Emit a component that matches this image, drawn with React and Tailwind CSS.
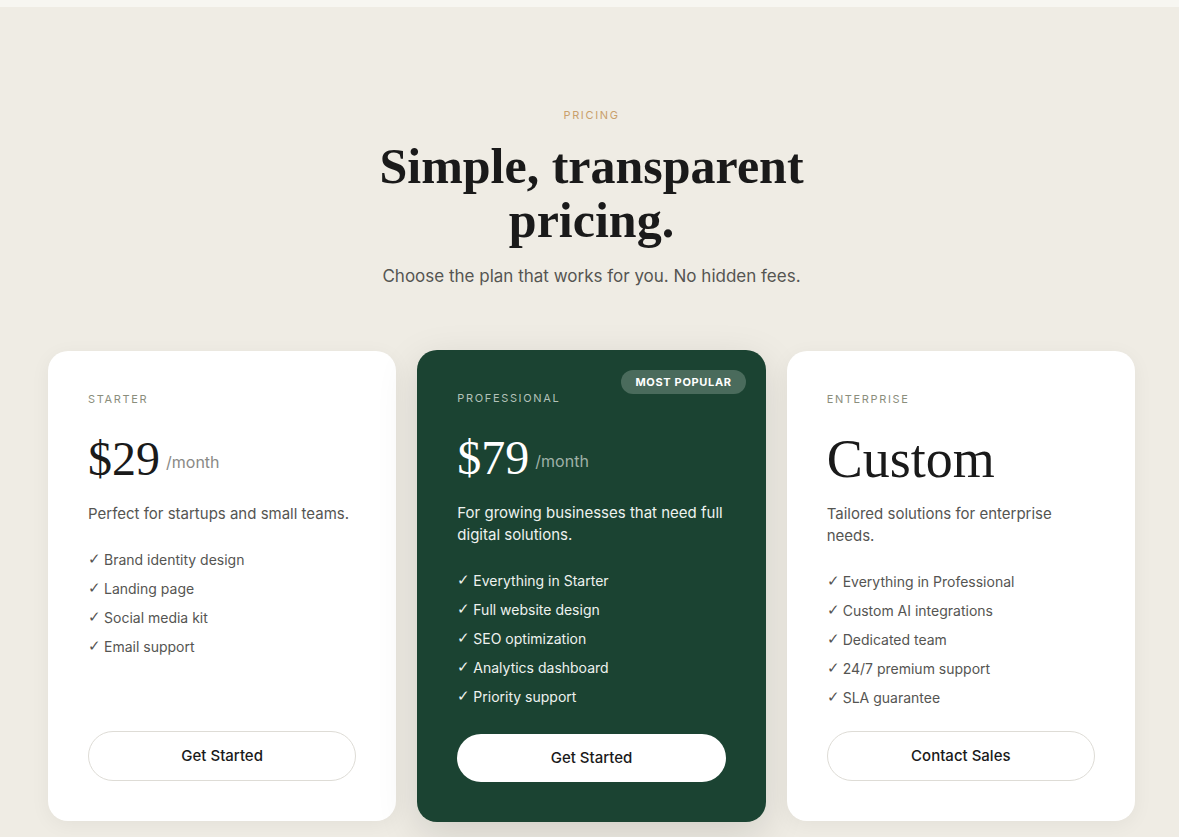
import React from "react";

const serif = { fontFamily: '"Liberation Serif", "DejaVu Serif", serif' };

const plans = [
  {
    name: "STARTER",
    price: "$29",
    per: "/month",
    desc: "Perfect for startups and small teams.",
    features: ["Brand identity design", "Landing page", "Social media kit", "Email support"],
    cta: "Get Started",
  },
  {
    name: "PROFESSIONAL",
    price: "$79",
    per: "/month",
    desc: "For growing businesses that need full digital solutions.",
    features: [
      "Everything in Starter",
      "Full website design",
      "SEO optimization",
      "Analytics dashboard",
      "Priority support",
    ],
    cta: "Get Started",
    featured: true,
  },
  {
    name: "ENTERPRISE",
    price: "Custom",
    desc: "Tailored solutions for enterprise needs.",
    features: [
      "Everything in Professional",
      "Custom AI integrations",
      "Dedicated team",
      "24/7 premium support",
      "SLA guarantee",
    ],
    cta: "Contact Sales",
  },
];

function Card({ p }) {
  const f = p.featured;
  return (
    <div
      className={
        f
          ? "relative -my-px flex flex-col rounded-[20px] bg-[#1b4332] px-10 pt-10 pb-10 shadow-[0_12px_40px_rgba(0,0,0,0.13)]"
          : "relative flex flex-col rounded-[20px] bg-white px-10 pt-10 pb-10 shadow-[0_4px_20px_rgba(0,0,0,0.05)]"
      }
    >
      {f && (
        <div className="absolute right-5 top-5 flex h-6 items-center rounded-full bg-[#4a6b5c] px-[14px] text-[11px] font-bold tracking-[0.06em] text-white">
          MOST POPULAR
        </div>
      )}
      <div
        className={
          "h-4 text-[11px] leading-4 tracking-[0.15em] " +
          (f ? "text-[#b3c2b9]" : "text-[#8b8e7c]")
        }
      >
        {p.name}
      </div>
      <div className="mt-6 flex h-14 items-end leading-[56px]">
        <span
          style={serif}
          className={
            (p.per ? "text-[48px] " : "text-[54px] ") +
            (f ? "text-white" : "text-[#1a1a1a]")
          }
        >
          {p.price}
        </span>
        {p.per && (
          <span
            className={
              "mb-[15px] ml-1.5 text-[16px] leading-5 " +
              (f ? "text-[#9fb1a7]" : "text-[#8a8a86]")
            }
          >
            {p.per}
          </span>
        )}
      </div>
      <p
        className={
          "mt-4 text-[15px] leading-[22px] " + (f ? "text-[#eef2ef]" : "text-[#555552]")
        }
      >
        {p.desc}
      </p>
      <ul className="mt-6 mb-[23px] flex flex-col gap-2">
        {p.features.map((x) => (
          <li
            key={x}
            className={
              "flex h-[21px] items-center gap-[3px] text-[14px] leading-[21px] " +
              (f ? "text-[#eef2ef]" : "text-[#555552]")
            }
          >
            <span
              style={{ fontFamily: '"DejaVu Sans", sans-serif' }}
              className="text-[15px] font-extralight leading-[21px]"
            >
              ✓
            </span>
            <span>{x}</span>
          </li>
        ))}
      </ul>
      <button
        className={
          f
            ? "mt-auto flex h-12 w-full items-center justify-center rounded-full bg-white text-[15px] font-medium text-[#1a1a1a]"
            : "mt-auto flex h-[50px] w-full items-center justify-center rounded-full border border-[#dedcd6] bg-white text-[15px] font-medium text-[#1a1a1a]"
        }
      >
        {p.cta}
      </button>
    </div>
  );
}

export default function App() {
  return (
    <div
      className="min-h-[837px] bg-[#efece4]"
      style={{ fontFamily: 'Inter, "Open Sans", "Liberation Sans", sans-serif' }}
    >
      <div className="h-[7px] bg-[#f7f6f1]" />
      <section className="pl-1 pt-[100px]">
        <div className="flex flex-col items-center text-center">
          <div className="text-[11px] leading-4 tracking-[0.15em] text-[#c9a06b]">PRICING</div>
          <h1
            style={serif}
            className="mt-4 text-[50px] font-bold leading-[54px] text-[#1a1a1a]"
          >
            Simple, transparent
            <br />
            pricing.
          </h1>
          <p className="mt-4 text-[17px] leading-[26px] text-[#555552]">
            Choose the plan that works for you. No hidden fees.
          </p>
        </div>
        <div className="mx-auto mt-[62px] grid w-[1087px] grid-cols-3 gap-[21px] pb-4">
          {plans.map((p) => (
            <Card key={p.name} p={p} />
          ))}
        </div>
      </section>
    </div>
  );
}
